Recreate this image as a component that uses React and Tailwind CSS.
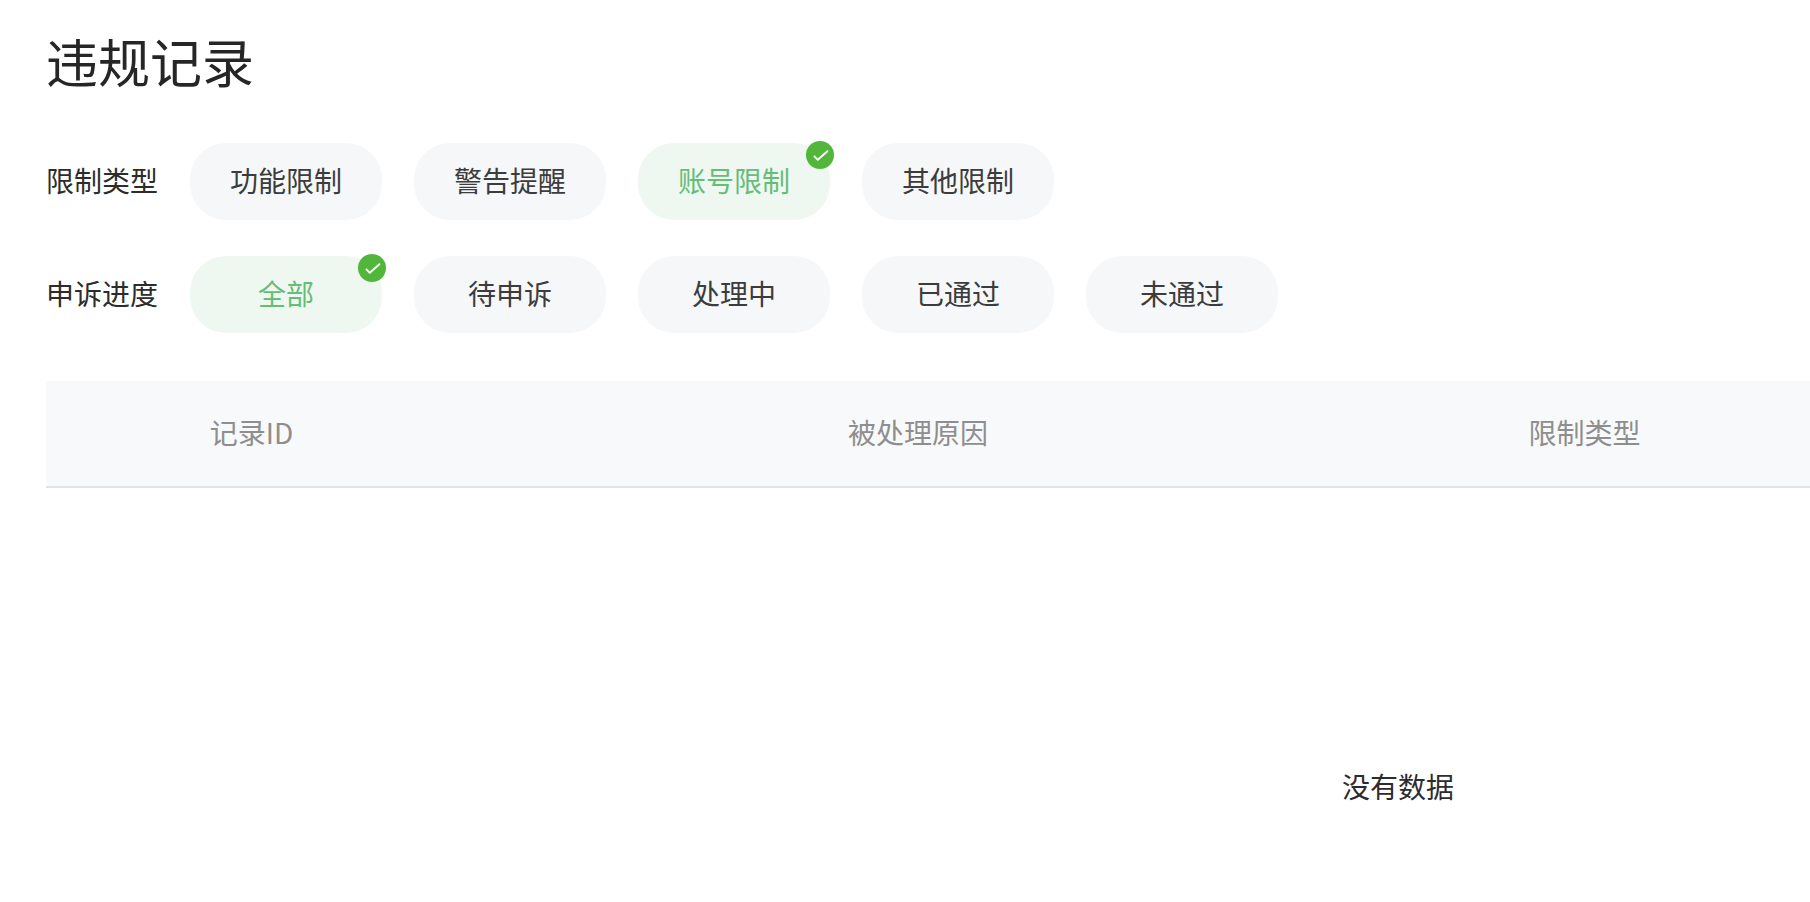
const font = { fontFamily: '"Noto Sans CJK SC", "Noto Sans", sans-serif' };

function Check() {
  return (
    <span className="absolute -right-1 -top-0.5 flex h-7 w-7 items-center justify-center rounded-full bg-[#52b63b]">
      <svg width="28" height="28" viewBox="0 0 28 28" fill="none">
        <path d="M8.4 15.4 L11.8 18.8 L21.4 10.2" stroke="#fff" strokeWidth="1.9" strokeLinecap="round" strokeLinejoin="round" />
      </svg>
    </span>
  );
}

function Pill({ label, active }) {
  return (
    <div
      className={
        "relative flex h-[77px] w-[192px] items-center justify-center rounded-[36px] pb-1 text-[28px] " +
        (active ? "bg-[#eef7f0] text-[#66bd78]" : "bg-[#f6f7f9] text-[#3c3c3c]")
      }
    >
      {label}
      {active && <Check />}
    </div>
  );
}

function Row({ title, items, active }) {
  return (
    <div className="flex items-center">
      <div className="w-[144px] pb-1 text-[28px] text-[#2c2c2c]">{title}</div>
      <div className="flex gap-8">
        {items.map((t) => (
          <Pill key={t} label={t} active={t === active} />
        ))}
      </div>
    </div>
  );
}

export default function App() {
  return (
    <div className="h-[902px] w-[1810px] overflow-hidden bg-white pl-[46px]" style={font}>
      <h1 className="pt-[23px] text-[52px] leading-[76px] font-normal text-[#262626]">违规记录</h1>
      <div className="mt-[44px] flex flex-col gap-9">
        <Row title="限制类型" items={["功能限制", "警告提醒", "账号限制", "其他限制"]} active="账号限制" />
        <Row title="申诉进度" items={["全部", "待申诉", "处理中", "已通过", "未通过"]} active="全部" />
      </div>
      <div className="mt-12 w-[2704px]">
        <div className="flex h-[107px] items-center border-b-2 border-[#e2e3e5] bg-[#f8f9fa] pb-1 text-[28px] text-[#8e8e8e]">
          <div className="w-[411px] text-center">记录ID</div>
          <div className="w-[922px] text-center">被处理原因</div>
          <div className="w-[411px] text-center">限制类型</div>
        </div>
        <div className="pt-[278px] text-center text-[28px] leading-10 text-[#2c2c2c]">没有数据</div>
      </div>
    </div>
  );
}
